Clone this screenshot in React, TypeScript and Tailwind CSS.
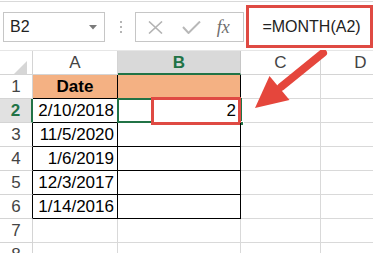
const font = { fontFamily: '"Liberation Sans", Arial, sans-serif' };

const dates = ["2/10/2018", "11/5/2020", "1/6/2019", "12/3/2017", "1/14/2016"];

function Toolbar() {
  return (
    <div className="h-[50px] bg-white">
      <div className="h-[2px] border-b border-[#d9d9d9]" />
      <div className="flex items-start">
        {/* Name box */}
        <div className="ml-[3px] mt-[10px] flex h-[30px] w-[102px] items-center border border-[#c6c6c6] pl-[6px] pr-[7px]">
          <span className="flex-1 text-[16px] text-[#222]">B2</span>
          <svg width="8" height="5" viewBox="0 0 8 5">
            <polygon points="0,0 8,0 4,4.5" fill="#7a7a7a" />
          </svg>
        </div>
        {/* dotted grip */}
        <div className="ml-[15px] mt-[19px] flex flex-col gap-[3px]">
          <div className="h-[2px] w-[2px] bg-[#b5b5b5]" />
          <div className="h-[2px] w-[2px] bg-[#b5b5b5]" />
          <div className="h-[2px] w-[2px] bg-[#b5b5b5]" />
        </div>
        {/* cancel / enter / fx */}
        <div className="ml-[13px] mt-[10px] flex h-[30px] w-[110px] items-center border border-[#c6c6c6] pl-[12px]">
          <svg width="15" height="13" viewBox="0 0 15 13">
            <path d="M1 0.5 L14 12.5 M14 0.5 L1 12.5" stroke="#b3b3b3" strokeWidth="1.6" fill="none" />
          </svg>
          <svg className="ml-[19px]" width="19" height="13" viewBox="0 0 19 13">
            <path d="M1 6 L6.5 12 L18 0.5" stroke="#b8b8b8" strokeWidth="2" fill="none" />
          </svg>
          <span
            className="ml-[16px] text-[18px] italic text-[#6e6e6e]"
            style={{ fontFamily: '"Liberation Serif", "Times New Roman", serif' }}
          >
            fx
          </span>
        </div>
        {/* formula bar, highlighted */}
        <div className="ml-[2px] mt-[3px] flex h-[43px] w-[127px] items-center border-[3px] border-[#df4a43] pl-[13px]">
          <span className="text-[16px] text-[#222]">=MONTH(A2)</span>
        </div>
      </div>
    </div>
  );
}

function ColHeader({ label, w, selected }: { label: string; w: string; selected?: boolean }) {
  return (
    <div
      className={`${w} flex h-full shrink-0 items-center justify-center border-r text-[17px] ${
        selected
          ? "border-b-2 border-b-[#217346] border-r-[#c6c6c6] bg-[#d9d9d9] font-bold text-[#217346]"
          : "border-b border-[#d4d4d4] text-[#444]"
      }`}
    >
      <span className={selected ? "pt-[2px]" : ""}>{label}</span>
    </div>
  );
}

function Grid() {
  return (
    <div className="relative text-[17px] text-black">
      {/* column headers */}
      <div className="flex h-[25px] border-t border-[#e6e6e6]">
        <div className="relative h-full w-[33px] shrink-0 border-r border-b border-[#d4d4d4]">
          <svg className="absolute left-[14px] top-[10px]" width="13" height="13" viewBox="0 0 13 13">
            <polygon points="13,0 13,13 0,13" fill="#d6d6d6" />
          </svg>
        </div>
        <ColHeader label="A" w="w-[85px]" />
        <ColHeader label="B" w="w-[123px]" selected />
        <ColHeader label="C" w="w-[80px]" />
        <ColHeader label="D" w="w-[80px]" />
      </div>

      {/* row 1 */}
      <div className="flex h-[24px]">
        <div className="flex w-[33px] shrink-0 items-center justify-center border-r border-b border-[#d4d4d4] text-[#444]">1</div>
        <div className="flex w-[85px] shrink-0 items-center justify-center border-r border-b border-black bg-[#f4b183] font-bold">
          Date
        </div>
        <div className="w-[123px] shrink-0 border-r border-b border-black bg-[#f4b183]" />
        <div className="w-[80px] shrink-0 border-r border-b border-[#d9d9d9]" />
        <div className="w-[80px] shrink-0 border-r border-b border-[#d9d9d9]" />
      </div>

      {dates.map((d, i) => {
        const sel = i === 0;
        return (
          <div key={d} className="flex h-[24px]">
            <div
              className={`flex w-[33px] shrink-0 items-center justify-center border-b border-b-[#d4d4d4] ${
                sel
                  ? "border-r-2 border-r-[#217346] bg-[#e1e1e1] font-bold text-[#217346]"
                  : "border-r border-r-black text-[#444]"
              }`}
            >
              {i + 2}
            </div>
            <div className="flex w-[85px] shrink-0 items-center justify-end border-r border-b border-black pr-[3px]">
              {d}
            </div>
            <div className="relative w-[123px] shrink-0 border-r border-b border-black">
              {sel && (
                <>
                  <div className="absolute -left-px -top-px bottom-[-1px] right-[-2px] border-2 border-[#217346]" />
                  <div className="absolute -bottom-[4px] -right-[4px] h-[5px] w-[5px] border border-white bg-[#217346]" />
                  <div className="absolute -top-[2px] -bottom-[3px] -right-px left-[33px] flex items-center justify-end border-[3px] border-[#df4a43] bg-white pr-[2px]">
                    2
                  </div>
                </>
              )}
            </div>
            <div className="w-[80px] shrink-0 border-r border-b border-[#d9d9d9]" />
            <div className="w-[80px] shrink-0 border-r border-b border-[#d9d9d9]" />
          </div>
        );
      })}

      {[7, 8].map((n) => (
        <div key={n} className="flex h-[24px]">
          <div className="flex w-[33px] shrink-0 items-center justify-center border-r border-b border-[#d4d4d4] text-[#444]">{n}</div>
          <div className="w-[85px] shrink-0 border-r border-b border-[#d9d9d9]" />
          <div className="w-[123px] shrink-0 border-r border-b border-[#d9d9d9]" />
          <div className="w-[80px] shrink-0 border-r border-b border-[#d9d9d9]" />
          <div className="w-[80px] shrink-0 border-r border-b border-[#d9d9d9]" />
        </div>
      ))}

      {/* callout arrow */}
      <svg className="pointer-events-none absolute left-0 top-0" width="373" height="203" viewBox="0 50 373 203">
        <line x1="323" y1="53" x2="281" y2="87" stroke="#e5463c" strokeWidth="8" strokeLinecap="round" />
        <polygon points="255,108 269.5,76 289.5,100" fill="#e5463c" />
      </svg>
    </div>
  );
}

export default function App() {
  return (
    <div className="h-[253px] w-[373px] overflow-hidden bg-white" style={font}>
      <Toolbar />
      <Grid />
    </div>
  );
}
